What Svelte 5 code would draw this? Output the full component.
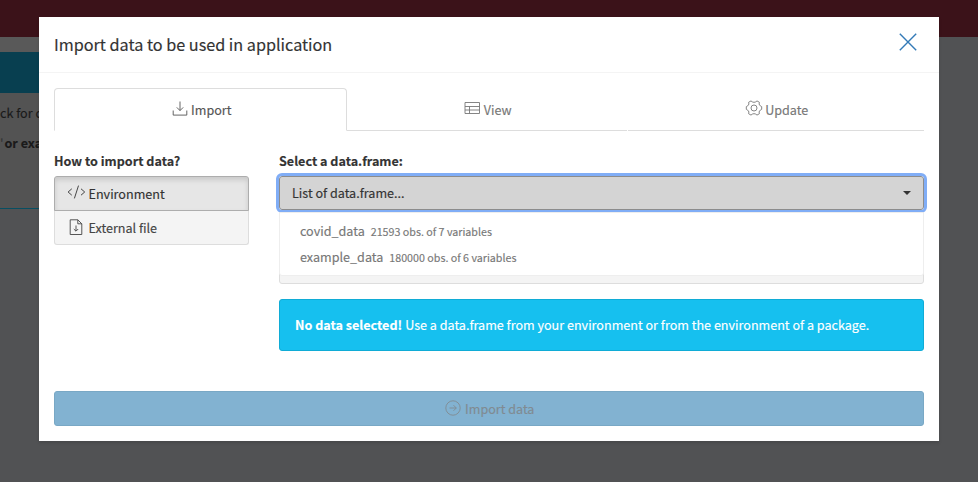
<script>
  const tabs = [
    { label: 'Import', icon: 'download' },
    { label: 'View', icon: 'table' },
    { label: 'Update', icon: 'gear' }
  ];
  const frames = [
    { name: 'covid_data', info: '21593 obs. of 7 variables' },
    { name: 'example_data', info: '180000 obs. of 6 variables' }
  ];
  let active = $state('Import');
  let source = $state('Environment');
</script>

{#snippet icon(name)}
  <svg class="icon {name}" viewBox="0 0 16 16" width="16" height="16" fill="none" stroke="currentColor" stroke-width=".9">
    {#if name === 'download'}
      <path d="M8 .5v9M4.8 6.4 8 9.6l3.2-3.2M1.2 9.5v4.6h13.6V9.5" />
    {:else if name === 'table'}
      <path d="M1 2.500h14.500v11H1zM1 6.500h14.500M1 10h14.500M5.500 6.500v7" />
    {:else if name === 'gear'}
      <path d="M6.300 1.900Q8 2.800 9.700 1.900L11 .9 13.400 2.300 13.100 4Q13.300 5.500 14.900 6.100L15.700 6.700V9.300L14.900 9.900Q13.300 10.500 13.100 12L13.400 13.700 11 15.100 9.700 14.100Q8 13.200 6.300 14.100L5 15.100 2.600 13.700 2.900 12Q2.700 10.500 1.100 9.900L.3 9.300V6.700L1.100 6.100Q2.700 5.500 2.900 4L2.600 2.300 5 .9Z" stroke-linejoin="round" />
      <circle cx="8" cy="8" r="3" />
    {:else if name === 'code'}
      <path d="M3.800 4.800.1 8l3.700 3.200M13 4.800 16.700 8l-3.700 3.200M10.500 1.600 6.400 14.400" />
    {:else if name === 'file'}
      <path d="M2.200.8h7.600l4 4v10.700H2.200zM9.800.8v4h4M8 6.500v5.500M5.800 10 8 12.200 10.200 10" />
    {:else}
      <circle cx="8" cy="8" r="7.200" />
      <path d="M4.500 8h6.800M8.500 5.200 11.300 8l-2.800 2.800" />
    {/if}
  </svg>
{/snippet}

<div class="screen">
  <div class="page">
    <div class="red"></div>
    <div class="gap"></div>
    <div class="teal"></div>
    <div class="content">
      <p>ck for c</p>
      <p class="strong"><i>'</i><span>or exa</span></p>
    </div>
  </div>

  <div class="modal">
    <header>
      <h4>Import data to be used in application</h4>
      <button class="close" aria-label="Close">
        <svg width="18" height="18" viewBox="0 0 18 18" fill="none" stroke="#337ab7" stroke-width="1.400"><path d="m.8.8 16.400 16.400M17.200.8.8 17.200" /></svg>
      </button>
    </header>
    <nav>
      {#each tabs as tab}
        <button class="tab" class:active={active === tab.label} onclick={() => (active = tab.label)}>
          {@render icon(tab.icon)}<span>{tab.label}</span>
        </button>
      {/each}
    </nav>
    <div class="row">
      <div class="side">
        <div class="label">How to import data?</div>
        <div class="group">
          <button class:on={source === 'Environment'} onclick={() => (source = 'Environment')}>{@render icon('code')}<span>Environment</span></button>
          <button class:on={source === 'External file'} onclick={() => (source = 'External file')}>{@render icon('file')}<span>External file</span></button>
        </div>
      </div>
      <div class="main">
        <div class="label">Select a data.frame:</div>
        <div class="picker">
          <button class="select"><span>List of data.frame...</span><i class="caret"></i></button>
          <div class="under"></div>
          <div class="menu">
            {#each frames as f}
              <div class="option">{f.name}<small>{f.info}</small></div>
            {/each}
          </div>
        </div>
        <div class="alert"><b>No data selected!</b> <span>Use a data.frame from your environment or from the environment of a package.</span></div>
      </div>
    </div>
    <button class="submit" disabled>{@render icon('arrow')}<span>Import data</span></button>
  </div>
</div>

<style>
  :global(body) { margin: 0; overflow: hidden; }
  .screen, .screen * { box-sizing: border-box; }
  .screen {
    position: relative;
    width: 978px;
    height: 482px;
    overflow: hidden;
    padding: 17px 39px;
    background: #515254;
    color: #333;
    font: 12.590px/20px "Noto Sans CJK SC", "Open Sans", sans-serif;
    -webkit-text-stroke: .15px;
  }
  button { font: inherit; color: inherit; margin: 0; padding: 0; }
  .icon { flex: none; overflow: visible; }
  .page { position: absolute; inset: 0; display: flex; flex-direction: column; color: #1a1a1a; }
  .red { height: 37px; background: #3b1219; }
  .gap { height: 15px; width: 39px; background: #595959; }
  .teal { height: 41px; width: 39px; background: #083f50; }
  .content { width: 39px; height: 116px; padding-top: 10px; background: #535353; border-bottom: 1px solid #084f62; white-space: nowrap; }
  .content p { margin: 0 0 10px; }
  .content .strong { font-weight: 700; display: flex; }
  .strong i { flex: none; width: 4.500px; font-weight: 400; font-style: normal; color: #333; }
  .modal {
    position: relative;
    width: 900px;
    height: 424px;
    background: #fff;
    box-shadow: 0 2px 3px rgba(0, 0, 0, .125);
    display: flex;
    flex-direction: column;
  }
  header { height: 56px; flex: none; padding: 0 22px 0 15px; display: flex; align-items: center; justify-content: space-between; border-bottom: 1px solid #f4f4f4; }
  h4 { margin: -2px 0 0; font-size: 16.2px; font-weight: 400; line-height: 20px; }
  .close { border: 0; background: none; display: flex; margin-top: -6px; }
  nav { height: 43px; margin: 15px 15px 0; display: flex; }
  .tab { flex: 0 0 280px; border: 0; border-bottom: 1px solid #ddd; background: none; color: #777; display: flex; gap: 3.500px; align-items: center; justify-content: center; padding: 1px 0 0 2px; }
  .tab:last-child { flex: 1; margin-left: 1px; }
  .tab .icon { margin-top: -3px; }
  .tab.active { flex: 0 0 293px; color: #555; border: 1px solid #ddd; border-bottom-color: transparent; border-radius: 4px 4px 0 0; }
  .row { display: flex; gap: 30px; padding: 20px 15px 0; }
  .side { width: 195px; }
  .main { flex: 1; }
  .label { font-weight: 700; height: 25px; line-height: 20px; }
  .group { height: 69px; display: flex; flex-direction: column; }
  .group button { height: 35px; border: 1px solid #ddd; background: #f4f4f4; color: #444; display: flex; align-items: center; gap: 4.500px; padding-left: 13px; border-radius: 0 0 3px 3px; }
  .group button + button { margin-top: -1px; border-top: 0; padding-top: 2px; }
  .group .on { position: relative; background: #e6e6e6; border-color: #adadad; color: #333; box-shadow: inset 0 3px 5px rgba(0, 0, 0, .125); border-radius: 3px 3px 0 0; }
  .group .icon { margin-top: -3px; }
  .picker { position: relative; height: 108px; }
  .select { width: 100%; height: 34px; border: 1px solid #8c8c8c; border-radius: 3px; background: #d4d4d4; color: #333; display: flex; align-items: center; justify-content: space-between; padding: 0 12px; outline: 3px solid #80adf6; outline-offset: 0; }
  .caret { border: 4px solid transparent; border-top-color: #333; border-bottom: 0; }
  .under { height: 74px; border: 1px solid #ddd; background: #f4f4f4; border-radius: 3px; }
  .menu { position: absolute; top: 36px; left: 0; right: 0; height: 64px; background: #fff; border: 1px solid #eee; border-radius: 0 0 3px 3px; padding-top: 5px; }
  .option { height: 26px; line-height: 26px; padding-left: 20px; color: #777; white-space: nowrap; }
  .option small { font-size: 10.700px; margin-left: 6px; }
  .alert { margin-top: 15px; height: 52px; display: flex; align-items: center; gap: 3px; padding: 0 15px; background: #16c0ef; border: 1px solid #10acd6; border-radius: 3px; color: #fff; white-space: nowrap; }
  .submit { margin: 40px 15px 0; height: 35px; flex: none; display: flex; align-items: center; justify-content: center; gap: 4.500px; padding-left: 1px; background: #82b2d1; border: 1px solid #79a8c5; border-radius: 3px; color: #808b92; }
  .submit .icon { margin-top: -2px; }
</style>
